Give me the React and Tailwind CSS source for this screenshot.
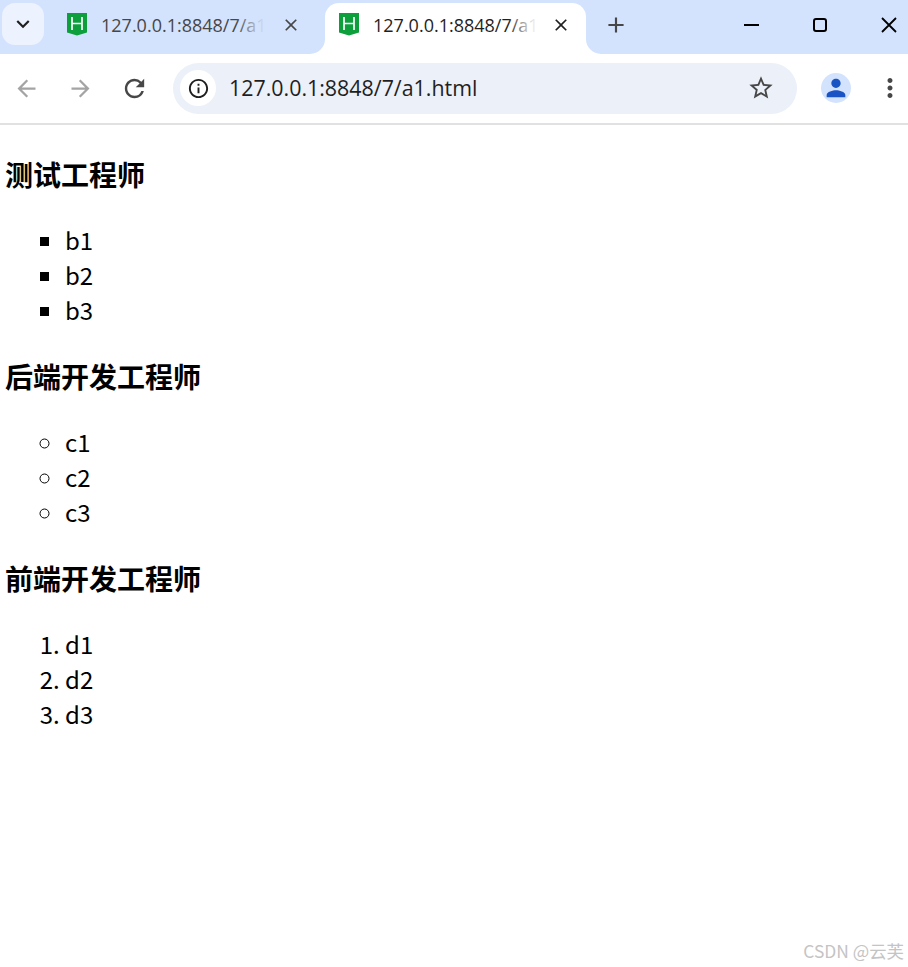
import { MdAdd, MdArrowBack, MdArrowForward, MdClose, MdInfoOutline, MdKeyboardArrowDown, MdMoreVert, MdPerson, MdRefresh, MdStarBorder } from 'react-icons/md';

const uiFont = 'font-["Open_Sans","Noto_Sans",sans-serif]';
const pageFont = 'font-["Noto_Sans_CJK_SC","Noto_Sans",sans-serif]';

function HtmlLogo() {
  return (
    <svg width="20" height="23" viewBox="0 0 20 23" className="shrink-0">
      <path d="M0 0H20V19.5L10 22.5L0 19.5Z" fill="#0c9f3c" />
      <path d="M5 4V17M15 4V17M5 10.5H15" stroke="#fff" strokeWidth="1.7" fill="none" />
    </svg>
  );
}

function Tab({ active }) {
  return (
    <div
      className={
        active
          ? 'relative flex h-[51px] w-[261px] shrink-0 items-center rounded-t-[14px] bg-white pb-[8px] pl-[14px]'
          : 'relative flex h-[51px] w-[281px] shrink-0 items-center pb-[8px] pl-[23px]'
      }
    >
      {active && (
        <>
          <div className="absolute -left-[15px] bottom-0 h-[15px] w-[15px] bg-white">
            <div className="h-full w-full rounded-br-[15px] bg-[#d3e3fd]" />
          </div>
          <div className="absolute -right-[15px] bottom-0 h-[15px] w-[15px] bg-white">
            <div className="h-full w-full rounded-bl-[15px] bg-[#d3e3fd]" />
          </div>
        </>
      )}
      <HtmlLogo />
      <div className={`relative ml-[14px] w-[165px] whitespace-nowrap text-[18px] leading-6 ${active ? 'text-[#1f1f1f]' : 'text-[#474747]'}`}>
        127.0.0.1:8848/7/a1
        <div className={`absolute inset-y-0 right-0 w-[30px] bg-gradient-to-r from-transparent via-70% ${active ? 'via-white/80 to-white' : 'via-[#d3e3fd]/80 to-[#d3e3fd]'}`} />
      </div>
      <MdClose className={`shrink-0 ${active ? 'ml-[13px] text-[#1f1f1f]' : 'ml-[15px] text-[#474747]'}`} size={20} />
    </div>
  );
}

function Section({ title, children }) {
  return (
    <>
      <h3 className="mb-[27px] mt-[29px] text-[28px] font-bold leading-[41px] text-black">{title}</h3>
      {children}
    </>
  );
}

export default function App() {
  return (
    <div className={`relative h-[967px] w-[908px] overflow-hidden bg-white ${uiFont}`}>
      <div className="flex h-[54px] items-start bg-[#d3e3fd] pl-[2px] pt-[3px]">
        <div className="flex h-[42px] w-[42px] shrink-0 items-center justify-center rounded-[13px] bg-[#ecf2fe]">
          <MdKeyboardArrowDown className="text-[#1f1f1f]" size={26} />
        </div>
        <Tab />
        <Tab active />
        <div className="ml-[16px] flex h-[44px] w-[28px] items-center justify-center text-[#474747]">
          <MdAdd size={26} />
        </div>
        <div className="ml-[114px] flex h-[44px] items-center text-black">
          <div className="h-[2px] w-[15px] bg-black" />
          <div className="ml-[54px] h-[14px] w-[14px] rounded-[3px] border-2 border-black" />
          <svg width="16" height="16" viewBox="0 0 16 16" className="ml-[54px]">
            <path d="M1 1L15 15M15 1L1 15" stroke="#000" strokeWidth="1.8" fill="none" />
          </svg>
        </div>
      </div>

      <div className="flex h-[71px] items-center border-b-2 border-[#e1e1e1] pb-[1px] pl-[13px]">
        <MdArrowBack className="text-[#a4a4a4]" size={27} />
        <MdArrowForward className="ml-[27px] text-[#a4a4a4]" size={27} />
        <MdRefresh className="ml-[26px] text-[#474747]" size={29} />
        <div className="ml-[24px] flex h-[51px] w-[624px] items-center rounded-full bg-[#ebf0f9] pl-[7px]">
          <div className="flex h-[36px] w-[36px] items-center justify-center rounded-full bg-white">
            <MdInfoOutline className="text-[#1f1f1f]" size={23} />
          </div>
          <div className="ml-[13px] text-[21.4px] leading-7 text-[#1f1f1f]">127.0.0.1:8848/7/a1.html</div>
          <MdStarBorder className="ml-auto mr-[22px] text-[#474747]" size={28} />
        </div>
        <div className="ml-[24px] flex h-[30px] w-[30px] items-center justify-center rounded-full bg-[#d3e3fd]">
          <MdPerson className="text-[#1a53c4]" size={28} />
        </div>
        <MdMoreVert className="ml-[24px] text-[#474747]" size={30} />
      </div>

      <div className={`px-[5px] ${pageFont}`}>
        <Section title="测试工程师">
          <ul className="list-[square] pl-[60px] text-[24px] leading-[35px] text-black">
            <li>b1</li>
            <li>b2</li>
            <li>b3</li>
          </ul>
        </Section>
        <Section title="后端开发工程师">
          <ul className="list-[circle] pl-[60px] text-[24px] leading-[35px] text-black">
            <li>c1</li>
            <li>c2</li>
            <li>c3</li>
          </ul>
        </Section>
        <Section title="前端开发工程师">
          <ol className="list-decimal pl-[60px] text-[24px] leading-[35px] text-black">
            <li>d1</li>
            <li>d2</li>
            <li>d3</li>
          </ol>
        </Section>
      </div>

      <div className={`absolute bottom-[4px] right-[4px] text-[17.4px] leading-6 text-[#c4c4c4] ${pageFont}`}>CSDN @云芙</div>
    </div>
  );
}
